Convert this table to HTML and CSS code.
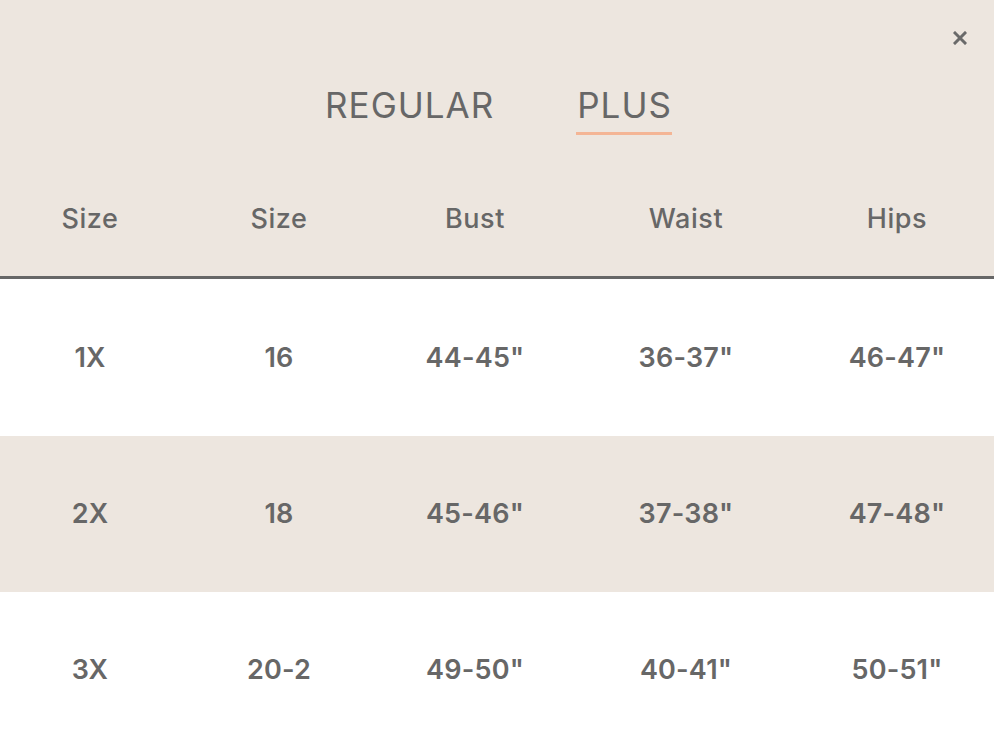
FILE: index.html
```html
<!DOCTYPE html>
<html lang="en">
<head>
<meta charset="utf-8">
<title>Size Chart</title>
<link rel="stylesheet" href="styles.css">
</head>
<body>
<div class="modal">
  <button class="close" aria-label="Close">
    <svg width="14" height="14" viewBox="0 0 14 14"><path d="M2 2L12 12M12 2L2 12" stroke="#6a6a6a" stroke-width="3" stroke-linecap="square"/></svg>
  </button>
  <div class="tabs">
    <span class="tab">REGULAR</span>
    <span class="tab active">PLUS</span>
  </div>
  <div class="table">
    <div class="row head">
      <div class="cell">Size</div>
      <div class="cell">Size</div>
      <div class="cell">Bust</div>
      <div class="cell">Waist</div>
      <div class="cell">Hips</div>
    </div>
    <div class="row body first">
      <div class="cell">1X</div>
      <div class="cell">16</div>
      <div class="cell">44-45"</div>
      <div class="cell">36-37"</div>
      <div class="cell">46-47"</div>
    </div>
    <div class="row body alt">
      <div class="cell">2X</div>
      <div class="cell">18</div>
      <div class="cell">45-46"</div>
      <div class="cell">37-38"</div>
      <div class="cell">47-48"</div>
    </div>
    <div class="row body">
      <div class="cell">3X</div>
      <div class="cell">20-2</div>
      <div class="cell">49-50"</div>
      <div class="cell">40-41"</div>
      <div class="cell">50-51"</div>
    </div>
  </div>
</div>
</body>
</html>
```

FILE: styles.css
```css
* { box-sizing: border-box; }
html, body { margin: 0; padding: 0; }
body {
  background: #ffffff;
  font-family: "Inter", "DejaVu Sans", sans-serif;
  color: #676767;
  overflow: hidden;
}
.modal {
  position: relative;
  background: #ede6df;
  padding-top: 86px;
}
.close {
  position: absolute;
  top: 31px;
  right: 27px;
  width: 14px;
  height: 14px;
  padding: 0;
  border: 0;
  background: none;
  display: flex;
}
.tabs {
  display: flex;
  justify-content: center;
  gap: 82px;
  padding-left: 2px;
}
.tab {
  display: block;
  font-size: 35px;
  line-height: 39px;
  height: 49px;
  font-weight: 400;
  letter-spacing: 1px;
  padding: 0 0 0 1px;
  border-bottom: 3px solid transparent;
}
.tab.active {
  border-bottom-color: #f4b595;
}
.table {
  margin-top: 24px;
}
.row {
  display: grid;
  grid-template-columns: 180px 198px 194px 228px 194px;
  align-items: center;
  text-align: center;
}
.row.head {
  height: 120px;
  border-bottom: 3px solid #676767;
  font-size: 27px;
  font-weight: 500;
  letter-spacing: 0.6px;
  padding-top: 2px;
}
.row.body {
  height: 156px;
  background: #ffffff;
  font-size: 27px;
  font-weight: 600;
  letter-spacing: 0.2px;
}
.row.body.first { height: 157px; }
.row.body.alt { background: #ede6df; }
.cell { line-height: 32px; }
```
